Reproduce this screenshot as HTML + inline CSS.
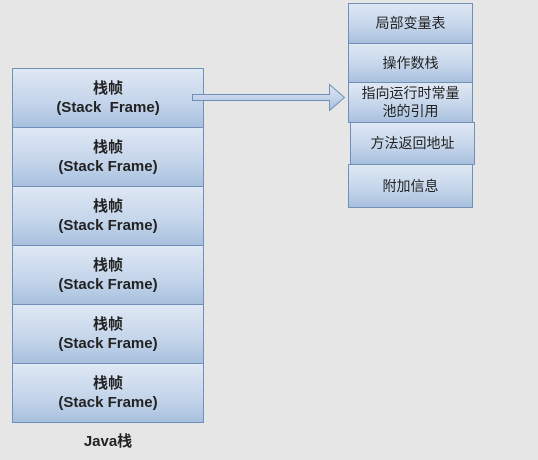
<!DOCTYPE html>
<html><head><meta charset="utf-8"><style>
body{margin:0;width:538px;height:460px;background:#e6e6e6;position:relative;overflow:hidden;font-family:"Liberation Sans","Noto Sans CJK SC",sans-serif;}
.b{position:absolute;box-sizing:border-box;border:1px solid #7190b8;background:linear-gradient(#dfe8f4,#c3d4ea 60%,#a8c0de);text-align:center;color:#222;}
.l{left:12px;width:192px;height:60px;font-size:15px;line-height:19px;padding-top:10px;font-weight:bold;}
.l b{font-size:14px;}
.r{font-size:14px;color:#222;}
</style></head><body>
<div class="b l" style="top:68px">栈帧<br>(Stack&nbsp; Frame)</div>
<div class="b l" style="top:127px">栈帧<br>(Stack Frame)</div>
<div class="b l" style="top:186px">栈帧<br>(Stack Frame)</div>
<div class="b l" style="top:245px">栈帧<br>(Stack Frame)</div>
<div class="b l" style="top:304px">栈帧<br>(Stack Frame)</div>
<div class="b l" style="top:363px">栈帧<br>(Stack Frame)</div>
<div style="position:absolute;left:12px;width:192px;top:430px;text-align:center;font-weight:bold;font-size:15px;color:#222">Java栈</div>
<svg style="position:absolute;left:0;top:0" width="538" height="460">
<defs><linearGradient id="g" x1="0" y1="0" x2="0" y2="1"><stop offset="0" stop-color="#dfe8f4"/><stop offset="1" stop-color="#a8c0de"/></linearGradient></defs>
<path d="M192.5 94.5H329.5V84.5L344.5 97.5L329.5 110.5V100.5H192.5Z" fill="url(#g)" stroke="#7190b8" stroke-width="1"/>
</svg>
<div class="b r" style="left:348px;top:3px;width:125px;height:41px;line-height:39px">局部变量表</div>
<div class="b r" style="left:348px;top:43px;width:125px;height:40px;line-height:38px">操作数栈</div>
<div class="b r" style="left:348px;top:82px;width:125px;height:41px;line-height:18px;padding-top:1px">指向运行时常量<br>池的引用</div>
<div class="b r" style="left:350px;top:122px;width:125px;height:43px;line-height:41px">方法返回地址</div>
<div class="b r" style="left:348px;top:164px;width:125px;height:44px;line-height:42px">附加信息</div>
</body></html>
